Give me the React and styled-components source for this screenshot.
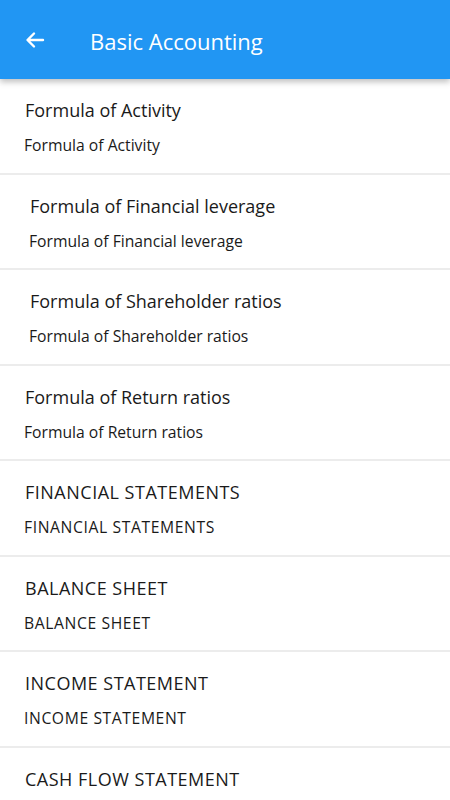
import React from "react";
import styled, { createGlobalStyle } from "styled-components";

const GlobalStyle = createGlobalStyle`
  html, body {
    margin: 0;
    padding: 0;
    background: #fff;
    font-family: "Open Sans", "Noto Sans", sans-serif;
  }
`;

const items = [
  { title: "Formula of Activity", indent: 25 },
  { title: "Formula of Financial leverage", indent: 30 },
  { title: "Formula of Shareholder ratios", indent: 30 },
  { title: "Formula of Return ratios", indent: 25 },
  { title: "FINANCIAL STATEMENTS", indent: 25, caps: true },
  { title: "BALANCE SHEET", indent: 25, caps: true },
  { title: "INCOME STATEMENT", indent: 25, caps: true },
  { title: "CASH FLOW STATEMENT", indent: 25, caps: true },
];

function BackArrow() {
  return (
    <svg width="24" height="24" viewBox="0 0 24 24">
      <path
        d="M20 12H5M11 5.5L4.5 12L11 18.5"
        fill="none"
        stroke="#fff"
        strokeWidth="2.4"
        strokeLinecap="round"
        strokeLinejoin="round"
      />
    </svg>
  );
}

export default function App() {
  return (
    <>
      <GlobalStyle />
      <Screen>
        <AppBar>
          <BackButton>
            <BackArrow />
          </BackButton>
          <Title>Basic Accounting</Title>
        </AppBar>
        <List>
          {items.map((item) => (
            <Row key={item.title}>
              <RowTitle $indent={item.indent} $caps={item.caps}>
                {item.title}
              </RowTitle>
              <RowSub $indent={item.indent - 1} $caps={item.caps}>
                {item.title}
              </RowSub>
            </Row>
          ))}
        </List>
      </Screen>
    </>
  );
}

const Screen = styled.div`
  width: 450px;
  height: 800px;
  overflow: hidden;
  display: flex;
  flex-direction: column;
  background: #fff;
`;

const AppBar = styled.header`
  height: 79px;
  flex-shrink: 0;
  background: #2196f3;
  display: flex;
  align-items: center;
  box-shadow: 0 3px 6px rgba(0, 0, 0, 0.25);
  position: relative;
  z-index: 1;
`;

const BackButton = styled.div`
  width: 24px;
  height: 24px;
  margin-left: 23px;
  margin-top: 0;
  display: flex;
`;

const Title = styled.h1`
  margin: 2px 0 0 43px;
  color: #fff;
  font-size: 22px;
  font-weight: 400;
`;

const List = styled.div`
  display: flex;
  flex-direction: column;
`;

const Row = styled.div`
  height: 93.5px;
  flex-shrink: 0;
  border-bottom: 2px solid #ececec;
  display: flex;
  flex-direction: column;
  box-sizing: content-box;
`;

const RowTitle = styled.div`
  margin: 18px 0 0 ${(p) => p.$indent}px;
  font-size: 18px;
  line-height: 26px;
  letter-spacing: ${(p) => (p.$caps ? "0.5px" : "0")};
  color: #1a1a1a;
`;

const RowSub = styled.div`
  margin: 12px 0 0 ${(p) => p.$indent}px;
  font-size: 15.7px;
  line-height: 20px;
  letter-spacing: ${(p) => (p.$caps ? "0.6px" : "0")};
  color: #1a1a1a;
`;
